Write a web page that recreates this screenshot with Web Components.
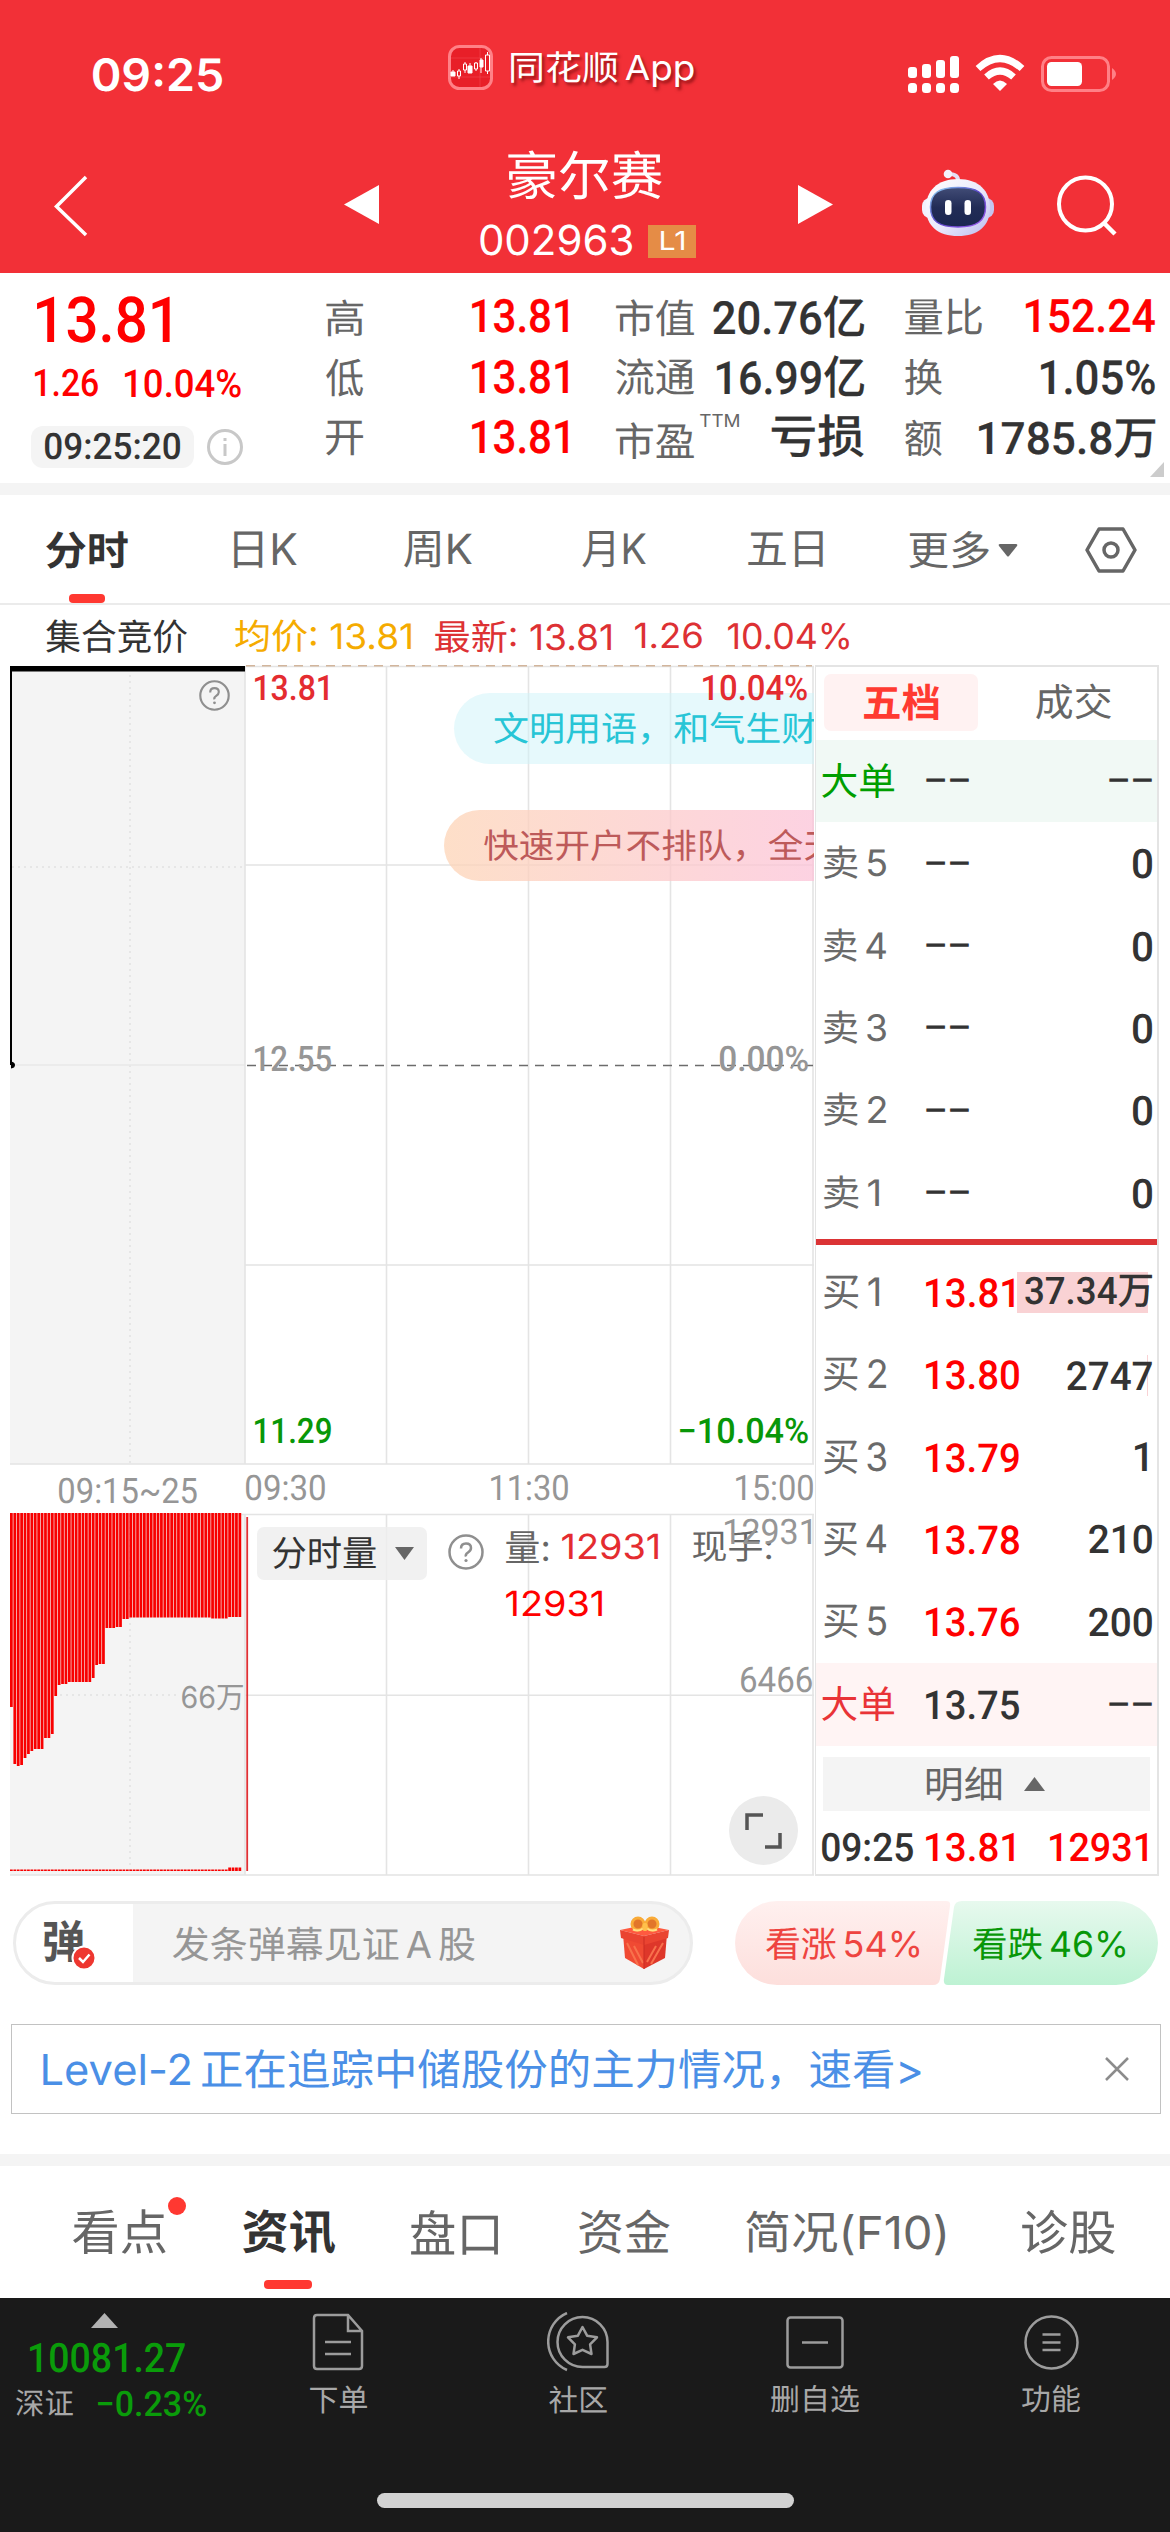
<!DOCTYPE html>
<html lang="zh-CN">
<head>
<meta charset="utf-8">
<title>豪尔赛 002963</title>
<style>
  html,
  body {
    margin: 0;
    padding: 0;
  }

  body {
    width: 1170px;
    height: 2532px;
    overflow: hidden;
    background: #ffffff;
    color: #333333;
    font-family: Inter, "Noto Sans CJK SC", sans-serif;
  }
</style>
</head>
<body>
<stock-page></stock-page>

<script>
// constants
const BAR_PITCH = 3.41;
const BAR_WIDTH = 2.75;
const BAR_COUNT = 68;
const DIGIT_FONT = 'Roboto, "Noto Sans CJK SC", sans-serif';

// a space that touches a Chinese character is set narrower
const NARROW_SPACE = /[\u4e00-\u9fff] | [\u4e00-\u9fff]/;

// [first x, bar length] runs of the auction volume
const AUCTION_RUNS = [
  [0, 194], [2, 251], [6, 253], [9, 252], [12.5, 245], [16, 241], [19, 238], [21, 236],
  [33.5, 225], [40, 221], [44, 183], [47, 172], [51, 171], [58, 169], [81, 165],
  [85, 152], [89, 151], [95.5, 115], [106, 114], [113, 106], [117, 104.5],
  [201, 105.5], [217, 104],
];

const measureContext = document.createElement('canvas').getContext('2d');


// text whose glyph box is exactly w x h
class InkText extends HTMLElement {
  connectedCallback() {
    const root = this.attachShadow({ mode: 'open' });
    root.innerHTML = `
      <style>
        :host {
          display: block;
          flex: none;
        }

        span {
          display: block;
          width: max-content;
          white-space: pre;
          text-rendering: geometricPrecision;
          transform-origin: 0 0;
        }
      </style>
      <span><slot></slot></span>
    `;

    if (this.hasAttribute('num')) {
      this.style.fontFamily = DIGIT_FONT;
      this.style.fontWeight = this.getAttribute('num') || 500;
    }

    const text = this.textContent;
    const style = getComputedStyle(this);
    const wordSpacing = NARROW_SPACE.test(text) ? -0.12 : 0;
    measureContext.font = `${style.fontWeight} 100px ${style.fontFamily}`;
    measureContext.textRendering = 'geometricPrecision';
    measureContext.wordSpacing = `${wordSpacing * 100}px`;
    const m = measureContext.measureText(text);
    const inkHeight = (m.actualBoundingBoxAscent + m.actualBoundingBoxDescent) / 100;
    const inkWidth = (m.actualBoundingBoxLeft + m.actualBoundingBoxRight) / 100;
    const size = Number(this.getAttribute('size')) || Number(this.getAttribute('h')) / inkHeight;
    const width = Number(this.getAttribute('w')) || inkWidth * size;
    const height = inkHeight * size;
    const scale = width / (inkWidth * size);
    const baseline = size / 2 + (m.fontBoundingBoxAscent - m.fontBoundingBoxDescent) / 200 * size;
    const left = m.actualBoundingBoxLeft / 100 * size * scale;
    const top = m.actualBoundingBoxAscent / 100 * size - baseline;

    this.style.width = `${width}px`;
    this.style.height = `${height}px`;
    if (this.hasAttribute('gap')) {
      this.style.marginLeft = `${this.getAttribute('gap')}px`;
    }
    const span = root.querySelector('span');
    span.style.fontSize = `${size}px`;
    span.style.lineHeight = `${size}px`;
    span.style.wordSpacing = `${wordSpacing}em`;
    span.style.transform = `translate(${left}px, ${top}px) scaleX(${scale})`;
  }
}


// base class for elements with static markup
class Panel extends HTMLElement {
  connectedCallback() {
    this.attachShadow({ mode: 'open' }).innerHTML =
      `<style>${this.constructor.styles}</style>${this.render()}`;
  }

  render() {
    return this.constructor.html;
  }
}


class StatusBar extends Panel {
  static styles = `
    :host {
      display: flex;
      height: 135px;
      color: #ffffff;
    }

    .clock { margin: 58px 0 0 93px; font-weight: 600; }
    .app { margin: 45px 0 0 226px; display: flex; }
    .app ink-text { margin: 8px 0 0 18px; text-shadow: 2px 3px 3px rgba(90, 0, 0, .6); }
    .signals { margin: 54px 0 0 213px; }
  `;

  static html = `
    <div class="clock"><ink-text w="129" h="34">09:25</ink-text></div>
    <div class="app">
      <svg width="45" height="45" viewBox="0 0 45 45">
        <rect x="1.5" y="1.5" width="42" height="42" rx="10" fill="#e81f28" stroke="#ff8187" stroke-width="3"/>
        <path d="M3 13H42M3 32H42M32 3V42" stroke="#f2484d" stroke-width=".6"/>
        <g stroke="#fff" stroke-width="1" fill="none">
          <path d="M5 25V31M11 24V34M17 17V28M22 18V21M28 17V26M33 13V28M39.500 7V29"/>
          <path fill="#fff" d="M3 27h4v4H3zM20 21h4v7h-4zM32 15h3v7h-3z"/>
          <path fill="#e81f28" d="M9.500 26h3v5h-3zM15.500 19h3v6h-3zM26.500 18h3v6h-3zM37.500 10h4v16h-4z"/>
        </g>
      </svg>
      <ink-text w="183" h="36">同花顺 App</ink-text>
    </div>
    <svg class="signals" width="212" height="42" viewBox="906 54 212 42">
      <g fill="#fff">
        <rect x="907" y="67" width="9" height="11" rx="3"/>
        <rect x="921" y="64" width="9" height="14" rx="3"/>
        <rect x="935" y="60" width="9" height="18" rx="3"/>
        <rect x="949" y="56" width="9" height="22" rx="3"/>
        <rect x="907" y="83" width="9" height="10" rx="3.500"/>
        <rect x="921" y="83" width="9" height="10" rx="3.500"/>
        <rect x="935" y="83" width="9" height="10" rx="3.500"/>
        <rect x="949" y="83" width="9" height="10" rx="3.500"/>
        <path d="M999 91L992 84Q999 77 1006 84Z"/>
      </g>
      <g fill="none" stroke="#fff" stroke-width="7">
        <path d="M977 68.500Q999 48.500 1021 68.500"/>
        <path d="M985.500 77Q999 65 1012.500 77"/>
      </g>
      <rect x="1041.500" y="57.500" width="66" height="33" rx="9" fill="none" stroke="#ff8086" stroke-width="3"/>
      <rect x="1046" y="62" width="35" height="24" rx="4.500" fill="#fff"/>
      <path d="M1111 68Q1119 74 1111 80Z" fill="#ff8086"/>
    </svg>
  `;
}


class TitleBar extends Panel {
  static styles = `
    :host {
      display: flex;
      height: 138px;
      color: #ffffff;
    }

    svg { flex: none; }
    .back { margin: 40px 0 0 53px; }
    .prev { margin: 50px 0 0 255px; }
    .title {
      width: 216px;
      margin: 15px 0 0 101px;
    }
    .title > ink-text { margin-left: 28px; }
    .code { display: flex; margin-top: 26px; }
    .level {
      display: flex;
      align-items: center;
      justify-content: center;
      width: 48px;
      height: 33px;
      margin-left: 16px;
      background: #e58c46;
    }
    .next { margin: 50px 0 0 102px; }
    .robot { margin: 34px 0 0 88px; }
    .search { margin: 39px 0 0 61px; }
  `;

  static html = `
    <svg class="back" width="36" height="62" viewBox="0 0 36 62"><path d="M33 2L3.500 31.500L33 60" fill="none" stroke="#fff" stroke-width="3.500"/></svg>
    <svg class="prev" width="35" height="39" viewBox="0 0 35 39"><path d="M35 0V39L0 19.500Z" fill="#fff"/></svg>
    <div class="title">
      <ink-text w="154" h="49">豪尔赛</ink-text>
      <div class="code">
        <ink-text w="152" h="31">002963</ink-text>
        <div class="level"><ink-text w="23" h="19">L1</ink-text></div>
      </div>
    </div>
    <svg class="next" width="35" height="39" viewBox="0 0 35 39"><path d="M0 0V39L35 19.500Z" fill="#fff"/></svg>
    <svg class="robot" width="74" height="68" viewBox="0 0 74 68">
      <defs>
        <linearGradient id="shell" x1="0" y1="0" x2="1" y2="1">
          <stop offset="0" stop-color="#ffffff"/>
          <stop offset=".55" stop-color="#eae8fb"/>
          <stop offset="1" stop-color="#b9bbee"/>
        </linearGradient>
        <linearGradient id="rim" x1="0" y1="0" x2="1" y2="1">
          <stop offset="0" stop-color="#8fd9f5"/>
          <stop offset=".5" stop-color="#5a45c8"/>
          <stop offset="1" stop-color="#a05cf0"/>
        </linearGradient>
        <linearGradient id="face" x1="0" y1="0" x2="0" y2="1">
          <stop offset="0" stop-color="#414c76"/>
          <stop offset=".5" stop-color="#222c56"/>
          <stop offset="1" stop-color="#1b2750"/>
        </linearGradient>
      </defs>
      <path d="M28 5Q38 5 37 13" fill="none" stroke="#e4dff5" stroke-width="4"/>
      <circle cx="27" cy="5" r="4.300" fill="#f4f1fc"/>
      <rect x="1" y="29" width="16" height="20" rx="8" fill="#f2f0fc"/>
      <rect x="57" y="29" width="16" height="20" rx="8" fill="#c5c5ef"/>
      <path d="M37 10C58 10 69 22 69 39C69 57 57 67 37 67S5 57 5 39C5 22 16 10 37 10Z" fill="url(#shell)"/>
      <path d="M37 18.500C56 18.500 64.500 24 64.500 38C64.500 52 56 58 37 58S9.500 52 9.500 38C9.500 24 18 18.500 37 18.500Z" fill="url(#face)" stroke="url(#rim)" stroke-width="1.500"/>
      <rect x="24" y="31" width="6.500" height="15" rx="3.250" fill="#fff"/>
      <rect x="43.500" y="31" width="6.500" height="15" rx="3.250" fill="#fff"/>
    </svg>
    <svg class="search" width="64" height="64" viewBox="0 0 64 64">
      <circle cx="29.500" cy="30" r="26.500" fill="none" stroke="#fff" stroke-width="4"/>
      <path d="M48 49L59 60" stroke="#fff" stroke-width="4.500"/>
    </svg>
  `;
}


class QuoteCell extends Panel {
  static styles = `
    :host {
      display: flex;
      align-items: center;
      justify-content: space-between;
      height: 60.5px;
      color: #333333;
    }

    :host([up]) { color: #ff0000; }
    .label { display: flex; color: #666666; }
    .value { -webkit-text-stroke: .2px currentColor; }
  `;

  static html = `
    <div class="label"><slot name="label"></slot></div>
    <div class="value"><slot></slot></div>
  `;
}


class QuoteBoard extends Panel {
  static styles = `
    :host {
      display: flex;
      position: relative;
      height: 210px;
      border-bottom: 12px solid #f4f4f4;
    }

    .price {
      width: 326px;
      color: #ff0000;
    }
    .price > ink-text { margin: 23px 0 0 37px; }
    .change { display: flex; margin: 27px 0 0 35px; }
    .stamp { display: flex; align-items: center; margin: 27px 0 0 31px; }
    .time {
      display: flex;
      align-items: center;
      justify-content: center;
      width: 163px;
      height: 42px;
      margin-right: 13px;
      border-radius: 12px;
      background: #f4f4f4;
      color: #333333;
    }
    .column { padding-top: 14px; }
    .high { width: 242px; }
    .cap { width: 248px; margin-left: 48px; }
    .flow { width: 250px; margin-left: 41px; }
    .fold {
      position: absolute;
      right: 6px;
      bottom: 6px;
    }
  `;

  static html = `
    <div class="price">
      <ink-text num w="133" h="47">13.81</ink-text>
      <div class="change">
        <ink-text num w="63" h="28">1.26</ink-text>
        <ink-text num w="116" h="28.500" gap="27">10.04%</ink-text>
      </div>
      <div class="stamp">
        <div class="time"><ink-text num w="135" h="27">09:25:20</ink-text></div>
        <svg width="36" height="36" viewBox="0 0 36 36">
          <circle cx="18" cy="18" r="16.500" fill="none" stroke="#c8c8c8" stroke-width="3"/>
          <path d="M18 15V27M18 9V12" stroke="#c8c8c8" stroke-width="3"/>
        </svg>
      </div>
    </div>
    <div class="column high">
      <quote-cell up><ink-text slot="label" w="37" h="37">高</ink-text><ink-text num w="96" h="34">13.81</ink-text></quote-cell>
      <quote-cell up><ink-text slot="label" w="37" h="38">低</ink-text><ink-text num w="96" h="34">13.81</ink-text></quote-cell>
      <quote-cell up><ink-text slot="label" w="37" h="35">开</ink-text><ink-text num w="96" h="34">13.81</ink-text></quote-cell>
    </div>
    <div class="column cap">
      <quote-cell><ink-text slot="label" w="78" h="37">市值</ink-text><ink-text num w="151" h="43">20.76亿</ink-text></quote-cell>
      <quote-cell><ink-text slot="label" w="78" h="37">流通</ink-text><ink-text num w="147" h="43">16.99亿</ink-text></quote-cell>
      <quote-cell>
        <ink-text slot="label" w="78" h="37" style="margin-top: 4px">市盈</ink-text>
        <ink-text slot="label" w="39" h="13" gap="6" style="margin-top: -3px">TTM</ink-text>
        <ink-text w="92" h="43" style="font-weight: 500; margin-top: -3px">亏损</ink-text>
      </quote-cell>
    </div>
    <div class="column flow">
      <quote-cell up><ink-text slot="label" w="77" h="37">量比</ink-text><ink-text num w="129" h="34">152.24</ink-text></quote-cell>
      <quote-cell><ink-text slot="label" w="37" h="37">换</ink-text><ink-text num w="114" h="35">1.05%</ink-text></quote-cell>
      <quote-cell><ink-text slot="label" w="37" h="37">额</ink-text><ink-text num w="176" h="39">1785.8万</ink-text></quote-cell>
    </div>
    <svg class="fold" width="14" height="15" viewBox="0 0 14 15"><path d="M14 0V15H0Z" fill="#cccccc"/></svg>
  `;
}


class PeriodTabs extends Panel {
  static styles = `
    :host {
      display: flex;
      align-items: center;
      box-sizing: border-box;
      height: 110px;
      padding-top: 2px;
      border-bottom: 2px solid #ebebeb;
      color: #666666;
    }

    .active {
      position: relative;
      margin-left: 46px;
      color: #333333;
      font-weight: 700;
    }
    .active::after {
      content: "";
      position: absolute;
      left: 23px;
      top: 63px;
      width: 36px;
      height: 9px;
      border-radius: 4px;
      background: #ff3831;
    }
    .arrow { margin: 0 0 0 9px; }
    .gear { margin-left: 67px; }
  `;

  static html = `
    <div class="active"><ink-text w="82" h="38">分时</ink-text></div>
    <ink-text w="63" h="37" gap="106">日K</ink-text>
    <ink-text w="68" h="37" gap="107">周K</ink-text>
    <ink-text w="64" h="37" gap="110">月K</ink-text>
    <ink-text w="75" h="36" gap="102">五日</ink-text>
    <ink-text w="80" h="38" gap="86">更多</ink-text>
    <svg class="arrow" width="20" height="13" viewBox="0 0 20 13"><path d="M2 0H18Q20 0 19 2L11 12Q10 13 9 12L1 2Q0 0 2 0Z" fill="#666"/></svg>
    <svg class="gear" width="52" height="46" viewBox="0 0 52 46">
      <path d="M14 2H38L50 23L38 44H14L2 23Z" fill="none" stroke="#666" stroke-width="3.500" stroke-linejoin="round"/>
      <circle cx="26" cy="23" r="7" fill="none" stroke="#666" stroke-width="3.500"/>
    </svg>
  `;
}


class PriceLine extends Panel {
  static styles = `
    :host {
      display: flex;
      align-items: center;
      height: 60px;
      padding-top: 2px;
      box-sizing: border-box;
    }

    .average { margin-left: 48px; color: #f5ab00; }
    .last { display: flex; align-items: center; margin-left: 24px; color: #dd3134; }
  `;

  static html = `
    <ink-text w="141" h="34" gap="46">集合竞价</ink-text>
    <div class="average"><ink-text w="176" h="33">均价: 13.81</ink-text></div>
    <div class="last">
      <ink-text w="176" h="33">最新: 13.81</ink-text>
      <ink-text w="67" h="26" gap="24">1.26</ink-text>
      <ink-text w="121" h="27" gap="26">10.04%</ink-text>
    </div>
  `;
}


class MinuteChart extends Panel {
  static styles = `
    :host {
      display: block;
      position: relative;
      width: 814px;
      height: 1211px;
      overflow: hidden;
    }

    svg.canvas { display: block; }

    /* labels lie over the plot */
    .over { position: absolute; }
    .rise { color: #e42c30; }
    .fall { color: #089708; }
    .mute { color: #969696; }
    .danmu {
      display: flex;
      align-items: center;
      height: 71px;
      border-radius: 36px 0 0 36px;
      white-space: nowrap;
    }
    .danmu ink-text { margin-top: 2px; }
    .polite {
      left: 454px;
      top: 28px;
      width: 360px;
      background: rgba(206, 243, 249, .5);
      color: #27c5d6;
    }
    .open {
      left: 444px;
      top: 145px;
      width: 370px;
      background: linear-gradient(90deg, rgba(253, 212, 182, .75), rgba(252, 195, 216, .75));
      color: #bd5a5a;
    }
    .picker {
      display: flex;
      align-items: center;
      left: 257px;
      top: 862px;
      width: 170px;
      height: 53px;
      border-radius: 7px;
      background: rgba(238, 238, 238, .8);
    }
    .picker svg { margin-left: 19px; }
    .expand {
      display: flex;
      align-items: center;
      justify-content: center;
      left: 729px;
      top: 1131px;
      width: 69px;
      height: 69px;
      border-radius: 50%;
      background: #ebebeb;
    }
  `;

  drawBars() {
    let bars = '';
    for (let i = 0; i < BAR_COUNT; i++) {
      const x = i * BAR_PITCH;
      const run = AUCTION_RUNS.filter(([start]) => start <= x + 0.5).pop();
      const unmatched = i > 63 ? 3.5 : 1.5;
      bars += `<rect x="${(10 + x).toFixed(2)}" y="848" width="${BAR_WIDTH}" height="${run[1]}"/>`;
      bars += `<rect x="${(10 + x).toFixed(2)}" y="${1206 - unmatched}" width="${BAR_WIDTH}" height="${unmatched}"/>`;
    }
    return bars;
  }

  help(size, left, top) {
    return `
      <svg class="over" style="left: ${left}px; top: ${top}px" width="${size}" height="${size}" viewBox="0 0 36 36">
        <circle cx="18" cy="18" r="16.500" fill="none" stroke="#8f8f8f" stroke-width="2.500"/>
        <path d="M13 14.500Q13 9.500 18 9.500T23 14Q23 16.500 20 18.500T18 22.500" fill="none" stroke="#8f8f8f" stroke-width="2.500"/>
        <circle cx="18" cy="26.500" r="1.600" fill="#8f8f8f"/>
      </svg>
    `;
  }

  render() {
    return `
      <svg class="canvas" width="814" height="1211" viewBox="0 0 814 1211">
        <path d="M10 1H245V799H10ZM10 850H245V1210H10Z" fill="#f4f4f4"/>
        <path d="M130 10V799M12 202H244M130 850V1210M60 1030H180" stroke="#e6e6e6" stroke-width="2" stroke-dasharray="2 4"/>
        <path d="M10 400H245" stroke="#e8e8e8" stroke-width="1.500"/>
        <g fill="none" stroke="#e4e4e4" stroke-width="1.600">
          <path d="M10 799H814M245 1V799M386.500 1V799M528.500 1V799M670.500 1V799M813 1V799"/>
          <path d="M245 1.500H814M245 200H814M245 600H814"/>
          <path d="M10 849.500H814M245 1030.300H814M10 1210H814M245 850V1210M386.500 850V1210M528.500 850V1210M670.500 850V1210M813 850V1210"/>
        </g>
        <path d="M246 .8H812" stroke="#d2b59c" stroke-width="1.500" stroke-dasharray="9 7"/>
        <path d="M247 400.500H813" stroke="#6c6c6c" stroke-width="1.500" stroke-dasharray="9 7"/>
        <path d="M10 1H245V6.500H10Z" fill="#000"/>
        <path d="M11 2V400" stroke="#000" stroke-width="2"/>
        <path d="M11 396.500Q15 397 15 400T11 403.500Z" fill="#000"/>
        <g fill="#f80000">${this.drawBars()}</g>
        <path d="M247.200 852V1206" stroke="#e03034" stroke-width="1.800"/>
      </svg>

      <ink-text num class="over rise" style="left: 255px; top: 10px" w="73" h="26">13.81</ink-text>
      <div class="over danmu polite"><ink-text w="322" h="33" gap="40">文明用语，和气生财</ink-text></div>
      <ink-text num class="over rise" style="left: 703px; top: 10px" w="104" h="26">10.04%</ink-text>
      <div class="over danmu open"><ink-text w="354" h="33" gap="40">快速开户不排队，全天</ink-text></div>
      ${this.help(31, 199, 15)}

      <ink-text num class="over mute" style="left: 255px; top: 381px" w="76" h="26">12.55</ink-text>
      <ink-text num class="over mute" style="left: 720px; top: 381px" w="88" h="26">0.00%</ink-text>
      <ink-text num class="over fall" style="left: 255px; top: 753px" w="76" h="26">11.29</ink-text>
      <ink-text num class="over fall" style="left: 680px; top: 753px" w="128" h="26">−10.04%</ink-text>

      <ink-text num="400" class="over mute" style="left: 59px; top: 813px" w="138" h="26">09:15~25</ink-text>
      <ink-text num="400" class="over mute" style="left: 246px; top: 810px" w="79" h="26">09:30</ink-text>
      <ink-text num="400" class="over mute" style="left: 491px; top: 810px" w="77" h="26">11:30</ink-text>
      <ink-text num="400" class="over mute" style="left: 736px; top: 810px" w="77" h="26">15:00</ink-text>

      <div class="over picker">
        <ink-text w="103" h="33" gap="16">分时量</ink-text>
        <svg width="19" height="13" viewBox="0 0 19 13"><path d="M0 0H19L9.500 13Z" fill="#666"/></svg>
      </div>
      ${this.help(36, 448, 869)}
      <ink-text class="over" style="left: 506px; top: 867px; color: #666" w="42" h="32">量:</ink-text>
      <ink-text class="over rise" style="left: 562px; top: 869px" w="96" h="26">12931</ink-text>
      <ink-text class="over" style="left: 693px; top: 867px; color: #666" w="78" h="32">现手:</ink-text>
      <ink-text class="over" style="left: 506px; top: 926px; color: #f00" w="96" h="26">12931</ink-text>
      <ink-text num="400" class="over mute" style="left: 725px; top: 854px" w="86" h="26">12931</ink-text>
      <ink-text num="400" class="over mute" style="left: 741px; top: 1002px" w="71" h="26">6466</ink-text>
      <ink-text class="over mute" style="left: 182px; top: 1021px" w="61" h="26">66万</ink-text>

      <div class="over expand">
        <svg width="37" height="36" viewBox="0 0 37 36"><path d="M2 17V2H18M35 20V34H20" fill="none" stroke="#555" stroke-width="3.500"/></svg>
      </div>
    `;
  }
}


class BookRow extends Panel {
  static styles = `
    :host {
      display: grid;
      grid-template-columns: 102px 1fr auto;
      align-items: center;
      box-sizing: border-box;
      height: 82.3px;
      padding: 0 5px 0 8px;
      color: #333333;
    }

    :host([big]) { padding-left: 6px; grid-template-columns: 104px 1fr auto; }
    :host([big="sell"]) { background: #f1f9f5; }
    :host([big="buy"]) { background: #fff4f4; }
    .label { color: #6a6a6a; }
    :host([big="sell"]) .label { color: #009e00; }
    :host([big="buy"]) .label { color: #e93337; }
    .price { min-width: 0; }
    :host([bid]) .price { color: #ff0000; }
    .volume { display: flex; align-items: center; justify-content: flex-end; }
    :host([fill]) .volume {
      height: 41px;
      padding-left: 8px;
      background: linear-gradient(#f9d2d4, #f9d2d4) 0 0 / 131px 100% no-repeat;
    }
    :host([fill]) .price { width: 88px; }
    :host([sliver]) .volume {
      height: 41px;
      background: linear-gradient(#f9d2d4, #f9d2d4) right 4px top 0 / 1px 100% no-repeat;
    }
  `;

  static html = `
    <div class="label"><slot name="label"></slot></div>
    <div class="price"><slot></slot></div>
    <div class="volume"><slot name="volume"></slot></div>
  `;
}


class OrderBook extends Panel {
  static styles = `
    :host {
      display: flex;
      flex-direction: column;
      box-sizing: border-box;
      width: 344px;
      height: 1211px;
      margin-left: 1px;
      border: 2px solid #e4e4e4;
      border-left-width: 1px;
    }

    .tabs { display: flex; height: 73px; flex: none; }
    .on {
      display: flex;
      align-items: center;
      justify-content: center;
      width: 154px;
      height: 57px;
      margin: 7px 0 0 8px;
      border-radius: 7px;
      background: #fff2f2;
      color: #ff3a31;
      font-weight: 700;
    }
    .off { margin: 17px 0 0 58px; color: #666666; }
    book-row { flex: none; }
    .split { flex: none; height: 6px; margin: 5px 0 7px; background: #db3335; }
    .more {
      display: flex;
      flex: none;
      align-items: center;
      width: 327px;
      height: 54px;
      margin: 11px 0 0 7px;
      background: #f4f4f4;
      color: #666666;
    }
    .more svg { margin-left: 23px; }
    .trade {
      display: flex;
      align-items: center;
      height: 29px;
      margin: 22px 0 0 6px;
    }
    .trade .red { display: flex; color: #ff0000; }
  `;

  render() {
    const dashes = (slot = '') => `<ink-text num w="43" size="34" ${slot}>––</ink-text>`;
    const label = (text) => `<ink-text slot="label" w="${text.endsWith('1') ? 55 : 62}" h="34">${text}</ink-text>`;
    const asks = [5, 4, 3, 2, 1].map((n) => `
      <book-row>
        ${label(`卖 ${n}`)}
        ${dashes()}
        <ink-text num slot="volume" w="19" h="30">0</ink-text>
      </book-row>
    `).join('');
    // [price, price width, volume, volume width, volume height, right inset]
    const bids = [
      ['13.81', 88, '37.34万', 127, 33, 0],
      ['13.80', 93, '2747', 85, 29, 0],
      ['13.79', 93, '1', 12, 29, 5],
      ['13.78', 93, '210', 63, 29, 0],
      ['13.76', 93, '200', 63, 29, 0],
    ].map(([price, pw, volume, vw, vh, inset], i) => `
      <book-row bid ${i === 0 ? 'fill' : ''} ${i === 1 ? 'sliver' : ''}>
        ${label(`买 ${i + 1}`)}
        <ink-text num w="${pw}" h="29.500">${price}</ink-text>
        <ink-text num slot="volume" style="margin-right: ${inset}px" w="${vw}" h="${vh}">${volume}</ink-text>
      </book-row>
    `).join('');

    return `
      <div class="tabs">
        <div class="on"><ink-text w="75" h="37">五档</ink-text></div>
        <div class="off"><ink-text w="75" h="36">成交</ink-text></div>
      </div>
      <book-row big="sell">
        <ink-text slot="label" w="72" h="35">大单</ink-text>
        ${dashes()}
        ${dashes('slot="volume"')}
      </book-row>
      ${asks}
      <div class="split"></div>
      ${bids}
      <book-row big="buy">
        <ink-text slot="label" w="72" h="35">大单</ink-text>
        <ink-text num w="93" h="29.500">13.75</ink-text>
        ${dashes('slot="volume"')}
      </book-row>
      <div class="more">
        <ink-text w="74" h="35" gap="104">明细</ink-text>
        <svg width="21" height="14" viewBox="0 0 21 14"><path d="M10.500 0L21 14H0Z" fill="#666"/></svg>
      </div>
      <div class="trade">
        <ink-text num w="91" h="29">09:25</ink-text>
        <div class="red">
          <ink-text num w="88" h="29" gap="13">13.81</ink-text>
          <ink-text num w="97" h="29" gap="36">12931</ink-text>
        </div>
      </div>
    `;
  }
}


class DanmuBar extends Panel {
  static styles = `
    :host {
      display: flex;
      height: 84px;
      margin-top: 25px;
      padding-left: 13px;
    }

    .input {
      display: flex;
      align-items: center;
      box-sizing: border-box;
      width: 680px;
      height: 84px;
      overflow: hidden;
      border: 3px solid #ececec;
      border-radius: 42px;
      background: linear-gradient(90deg, #ffffff 117px, #f4f4f4 117px);
      color: #969696;
    }
    .toggle { position: relative; margin: -4px 0 0 28px; color: #555555; font-weight: 700; }
    .toggle svg { position: absolute; left: 27px; top: 25px; }
    .gift { margin-left: 145px; }
    .vote {
      position: relative;
      display: flex;
      width: 423px;
      height: 84px;
      margin-left: 42px;
    }
    .vote > svg { position: absolute; }
    .vote ink-text { position: relative; margin-top: 27px; }
    .bull { margin-left: 31px; color: #ee4440; }
    .bear { margin-left: 54px; color: #089708; }
  `;

  static html = `
    <div class="input">
      <div class="toggle">
        <ink-text w="40" h="42">弹</ink-text>
        <svg width="26" height="26" viewBox="0 0 26 26">
          <circle cx="13" cy="13" r="11.500" fill="#ee3730" stroke="#fff" stroke-width="2"/>
          <path d="M8 13L12 17L18.500 9.500" fill="none" stroke="#fff" stroke-width="2.500"/>
        </svg>
      </div>
      <ink-text w="302" h="35" gap="89">发条弹幕见证 A 股</ink-text>
      <svg class="gift" width="50" height="54" viewBox="0 0 50 54">
        <path d="M3 18L24 24V53L5 42Z" fill="#f04a33"/>
        <path d="M47 18L24 24V53L45 42Z" fill="#de372a"/>
        <path d="M7 27L18 49M14 30L23 47M43 27L31 48M36 30L27 46" stroke="#f8714c" stroke-width="2"/>
        <path d="M0 14L24 9L49 14L24 20Z" fill="#ff5a40"/>
        <path d="M0 14L24 20L49 14L48 22L24 29L1 22Z" fill="#ea4431"/>
        <path d="M24 21V53" stroke="#cb2d23" stroke-width="1"/>
        <g fill="#e2762a" stroke="#f9ab38" stroke-width="3">
          <ellipse cx="18" cy="8" rx="6" ry="6"/>
          <ellipse cx="32" cy="8" rx="6" ry="6"/>
        </g>
        <path d="M13 13.500Q18 16 23 12.500M37 13.500Q32 16 27 12.500" fill="none" stroke="#ffe184" stroke-width="2"/>
        <rect x="22.500" y="7" width="5" height="8" rx="2" fill="#ffc04b"/>
      </svg>
    </div>
    <div class="vote">
      <svg width="423" height="84" viewBox="0 0 423 84">
        <defs>
          <linearGradient id="bull" x2="0" y2="1"><stop stop-color="#fff0ef"/><stop offset="1" stop-color="#fddfdc"/></linearGradient>
          <linearGradient id="bear" x2="0" y2="1"><stop stop-color="#e7f9ee"/><stop offset="1" stop-color="#bdf2d3"/></linearGradient>
        </defs>
        <path d="M42 0H211Q216 0 215 5L205 78Q204 84 198 84H42A42 42 0 0 1 42 0Z" fill="url(#bull)"/>
        <path d="M227 0H381A42 42 0 0 1 381 84H213Q208 84 209 78L219 6Q220 0 227 0Z" fill="url(#bear)"/>
      </svg>
      <ink-text class="bull" w="153" h="33">看涨 54%</ink-text>
      <ink-text class="bear" w="152" h="33">看跌 46%</ink-text>
    </div>
  `;
}


class LevelNotice extends Panel {
  static styles = `
    :host {
      display: flex;
      align-items: center;
      justify-content: space-between;
      box-sizing: border-box;
      width: 1150px;
      height: 90px;
      margin: 39px 0 40px 11px;
      padding: 2px 31px 0 31px;
      border: 1.5px solid #c2c2c2;
      color: #4a8fe6;
    }

    svg { margin-top: -3px; }
  `;

  static html = `
    <ink-text w="878" h="41">Level-2 正在追踪中储股份的主力情况，速看&gt;</ink-text>
    <svg width="24" height="24" viewBox="0 0 24 24"><path d="M1 1L23 23M23 1L1 23" stroke="#8c8c8c" stroke-width="2.500"/></svg>
  `;
}


class SectionTabs extends Panel {
  static styles = `
    :host {
      display: flex;
      align-items: center;
      box-sizing: border-box;
      height: 144px;
      border-top: 12px solid #f4f4f4;
      color: #666666;
    }

    .dot, .active { position: relative; }
    .dot { margin-left: 73px; }
    .dot::after {
      content: "";
      position: absolute;
      left: 95px;
      top: -13px;
      width: 18px;
      height: 18px;
      border-radius: 50%;
      background: #ff3831;
    }
    .active { margin-left: 77px; color: #333333; font-weight: 700; }
    .active::after {
      content: "";
      position: absolute;
      left: 21px;
      top: 70px;
      width: 48px;
      height: 9px;
      border-radius: 4px;
      background: #ff3831;
    }
  `;

  static html = `
    <div class="dot"><ink-text w="93" h="45">看点</ink-text></div>
    <div class="active"><ink-text w="92" h="45">资讯</ink-text></div>
    <ink-text w="87" h="45" gap="76">盘口</ink-text>
    <ink-text w="91" h="45" gap="81">资金</ink-text>
    <ink-text w="199" h="45" gap="76">简况(F10)</ink-text>
    <ink-text w="93" h="45" gap="77">诊股</ink-text>
  `;
}


class NavItem extends Panel {
  static styles = `
    :host {
      display: flex;
      flex-direction: column;
      align-items: center;
      width: 120px;
    }

    .icon {
      display: flex;
      align-items: center;
      height: 58px;
      margin: 15px 0;
    }
  `;

  static html = `
    <div class="icon"><slot name="icon"></slot></div>
    <slot></slot>
  `;
}


class BottomBar extends Panel {
  static styles = `
    :host {
      display: flex;
      flex-direction: column;
      align-items: center;
      height: 234px;
      background: #1a1a1a;
      color: #a8a8a8;
    }

    .items { display: flex; width: 1170px; height: 195px; }
    .index { width: 278px; flex: none; }
    .index svg { display: block; margin: 15px 0 14px 91px; }
    .index > ink-text { margin-left: 30px; }
    .line { display: flex; align-items: center; margin: 19px 0 0 16px; }
    .line .green { margin-top: -2px; }
    .green { color: #0a9c0a; }
    nav-item + nav-item { margin-left: 120px; }
    nav-item.remove { margin-left: 117px; }
    nav-item.menu { margin-left: 116px; }
    .home { width: 417px; height: 15px; border-radius: 8px; background: #d2d2d2; }
  `;

  static html = `
    <div class="items">
      <div class="index">
        <svg width="27" height="15" viewBox="0 0 27 15"><path d="M13.500 0L27 15H0Z" fill="#b2b2b2"/></svg>
        <ink-text num class="green" w="155" h="30">10081.27</ink-text>
        <div class="line">
          <ink-text w="57" h="27">深证</ink-text>
          <ink-text num class="green" w="108" h="26" gap="25">−0.23%</ink-text>
        </div>
      </div>
      <nav-item>
        <svg slot="icon" width="52" height="58" viewBox="0 0 52 58" fill="none" stroke="#9c9c9c" stroke-width="2.500">
          <path d="M5 2H36L50 18V53Q50 56 47 56H5Q2 56 2 53V5Q2 2 5 2ZM36 2V18H50M13 29H39M13 41H39"/>
        </svg>
        <ink-text w="57" h="28">下单</ink-text>
      </nav-item>
      <nav-item>
        <svg slot="icon" width="62" height="60" viewBox="0 0 62 60" fill="none" stroke="#9c9c9c" stroke-width="2.500">
          <path d="M20 1A31 31 0 0 0 20 58"/>
          <path d="M35.500 5A25 25 0 0 1 60.500 30V52Q60.500 55 57.500 55H35.500A25 25 0 0 1 35.500 5Z"/>
          <path d="M35.500 15L40.100 23.700L50 25.300L43.100 32.400L44.500 42L35.500 37.800L26.500 42L27.900 32.400L21 25.300L30.900 23.700Z" stroke-linejoin="round"/>
        </svg>
        <ink-text w="58" h="28">社区</ink-text>
      </nav-item>
      <nav-item class="remove">
        <svg slot="icon" width="58" height="53" viewBox="0 0 58 53" fill="none" stroke="#9c9c9c" stroke-width="2.500">
          <rect x="1.500" y="1.500" width="55" height="50" rx="3"/>
          <path d="M16 26.500H42"/>
        </svg>
        <ink-text w="88" h="28">删自选</ink-text>
      </nav-item>
      <nav-item class="menu">
        <svg slot="icon" width="55" height="55" viewBox="0 0 55 55" fill="none" stroke="#9c9c9c" stroke-width="2.500">
          <circle cx="27.500" cy="27.500" r="26"/>
          <path d="M18.500 19.500H36.500M18.500 27.500H36.500M18.500 35H36.500"/>
        </svg>
        <ink-text w="58" h="28">功能</ink-text>
      </nav-item>
    </div>
    <div class="home"></div>
  `;
}


class StockPage extends Panel {
  static styles = `
    :host {
      display: flex;
      flex-direction: column;
      width: 1170px;
      height: 2532px;
    }

    :host > * { flex: none; }
    header { background: #f23037; }
    .market { display: flex; }
  `;

  static html = `
    <header>
      <status-bar></status-bar>
      <title-bar></title-bar>
    </header>
    <quote-board></quote-board>
    <period-tabs></period-tabs>
    <price-line></price-line>
    <div class="market">
      <minute-chart></minute-chart>
      <order-book></order-book>
    </div>
    <danmu-bar></danmu-bar>
    <level-notice></level-notice>
    <section-tabs></section-tabs>
    <bottom-bar></bottom-bar>
  `;
}


customElements.define('ink-text', InkText);
customElements.define('status-bar', StatusBar);
customElements.define('title-bar', TitleBar);
customElements.define('quote-cell', QuoteCell);
customElements.define('quote-board', QuoteBoard);
customElements.define('period-tabs', PeriodTabs);
customElements.define('price-line', PriceLine);
customElements.define('minute-chart', MinuteChart);
customElements.define('book-row', BookRow);
customElements.define('order-book', OrderBook);
customElements.define('danmu-bar', DanmuBar);
customElements.define('level-notice', LevelNotice);
customElements.define('section-tabs', SectionTabs);
customElements.define('nav-item', NavItem);
customElements.define('bottom-bar', BottomBar);
customElements.define('stock-page', StockPage);
</script>
</body>
</html>
